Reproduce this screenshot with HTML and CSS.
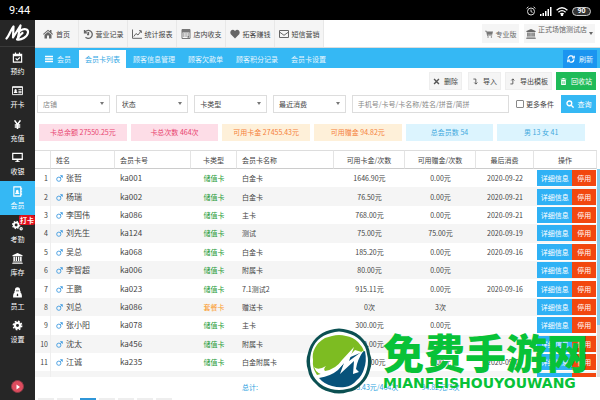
FILE: index.html
```html
<!DOCTYPE html>
<html lang="zh-CN">
<head>
    <meta charset="UTF-8">
    <meta name="viewport" content="width=device-width, initial-scale=1.0">
    <title>会员卡列表</title>
    <link rel="stylesheet" href="styles.css">
</head>
<body>
    <div class="status-bar">
        <span class="clock">9:44</span>
        <div class="status-icons">
            <svg width="10" height="10" viewBox="0 0 10 10" fill="none" stroke="#ddd"><circle cx="5" cy="5.5" r="3.5"/><path d="M5 3.5v2.2l1.6.6M.6 2.4L2.4.8M9.4 2.4L7.6.8"/></svg>
            <svg width="12" height="9" viewBox="0 0 12 9" fill="#fff"><path d="M0 7h1.5v2H0zM2.5 6H4v3H2.5zM5 4h1.5v5H5zM7.5 2H9v7H7.500zM10 0h1.500v9H10z"/></svg>
            <svg width="12" height="9" viewBox="0 0 12 9" fill="none" stroke="#fff" stroke-width="1.3"><path d="M.6 3.200Q6-1.600 11.400 3.200M2.400 5.200Q6 2 9.600 5.200M4.300 7Q6 5.600 7.700 7"/><circle cx="6" cy="8" r=".6"/></svg>
            <span class="battery">90</span>
        </div>
    </div>

    <div class="app">
        <aside class="sidebar">
            <div class="logo">
                <svg width="25" height="18" viewBox="0 0 25 18" fill="none" stroke="#fff" stroke-width="2.200" stroke-linecap="round" stroke-linejoin="round"><path d="M1.500 14.500C4 12 5.500 6 8.500 2.500L8 13.500 15.500 1.500 13 13.500"/><path d="M15.500 6.500C19 4 23.500 5 23 8.500 22.500 13 16 16.500 12 15.500 13.500 12.500 15 10.500 17.500 9"/></svg>
            </div>
            <nav class="side-nav">
                <a href="#"><svg viewBox="0 0 12 12" fill="none" stroke="#fff" stroke-width="1.300"><path d="M1.500 2.500h9v8.500h-9zM1.500 4h9M3.800.5v2.500M8.200.5v2.500M4 7l1.600 1.600L8.500 6"/></svg>预约</a>
                <a href="#"><svg viewBox="0 0 12 12"><path fill="none" stroke="#fff" d="M.5 2h11v8.500H.5z"/><path fill="#fff" d="M.5 1.500h11v1.500H.5zM2 8.800V7.500l1-.7a1.300 1.300 0 1 1 1.800 0l1 .7v1.300zM7 4.500h3.500v1H7zM7 6.300h3.500v1H7zM7 8h3.500v1H7z"/></svg>开卡</a>
                <a href="#"><svg viewBox="0 0 12 12" fill="none" stroke="#fff" stroke-width="1.700"><path d="M2.800 1.500L6 6l3.200-4.500M6 6v5M3 6.500h6M3 8.700h6"/></svg>充值</a>
                <a href="#"><svg viewBox="0 0 12 12"><path fill="none" stroke="#fff" stroke-width="1.300" d="M.8 1.500h10.400v6.700H.8z"/><path fill="#fff" d="M1 7h10v1.500H1zM5 8.500h2v1.500h1.500v1h-5v-1H5z"/></svg>收银</a>
                <a href="#" class="active"><svg viewBox="0 0 12 12"><path fill="none" stroke="#fff" stroke-width="1.200" d="M2 1h7.500v10H2z"/><path fill="#fff" d="M10 2h1v2h-1zM10 5h1v2h-1zM10 8h1v2h-1zM3.500 8.800V7.500l1.200-.8a1.500 1.500 0 1 1 2.100 0l1.200.8v1.300z"/></svg>会员</a>
                <a href="#"><svg viewBox="0 0 12 12" fill="none" stroke="#fff"><circle cx="4.500" cy="5.500" r="2.600" stroke-width="2"/><circle cx="4.500" cy="5.500" r="4" stroke-width="1.200" stroke-dasharray="1.600 1.540"/><circle cx="10" cy="9.500" r="1.200" stroke-width="1.300"/></svg>考勤<span class="badge">打卡</span></a>
                <a href="#"><svg viewBox="0 0 12 12" fill="#fff"><path d="M6 0l5.500 2.500v1H.5v-1zM1.500 4.200h1.700v4.600H1.500zM4 4.200h1.500v4.600H4zM6.500 4.200H8v4.600H6.500zM8.800 4.200h1.700v4.600H8.800zM1 9.200h10v.8H1zM.3 10.500h11.400v1.200H.3z"/></svg>库存</a>
                <a href="#"><svg viewBox="0 0 12 12" fill="#fff"><path d="M3.200 4Q3 .3 6 .3T8.800 4l.9.500-.9.900Q11 6.500 10.800 11.500H1.200Q1 6.500 3.200 5.400l-.9-.9z"/><path fill="#262626" d="M4.300 3.700h3.400v.8H4.300zM5.500 7.300h1l.4 1.900-.9.800-.9-.8z"/></svg>员工</a>
                <a href="#"><svg viewBox="0 0 12 12" fill="none" stroke="#fff"><circle cx="6" cy="6" r="2.800" stroke-width="2.400"/><circle cx="6" cy="6" r="4.600" stroke-width="1.600" stroke-dasharray="1.900 1.710"/></svg>设置</a>
            </nav>
            <div class="player">
                <button class="play" aria-label="播放"><svg width="6" height="6" viewBox="0 0 6 6" fill="#fff"><path d="M1.500.5L5 3 1.500 5.500z"/></svg></button>
            </div>
        </aside>

        <main class="main">
            <header class="top">
                <nav class="top-nav">
                    <a href="#"><svg viewBox="0 0 10 10" fill="#666"><path d="M0 5L5 .7 7 2.300V1h1.500v2.600L10 5l-.6.700L5 2 .6 5.700zM1.500 5.800L5 3l3.500 2.800V9.500H6V6.500H4v3H1.500z"/></svg>首页</a>
                    <a href="#"><svg viewBox="0 0 10 10" fill="none" stroke="#666" stroke-width="1.300"><path d="M1.500 1v2.800h3M1.700 3.500A4 4 0 1 1 2.500 8.300M5.500 3v2.500H4"/></svg>营业记录</a>
                    <a href="#"><svg viewBox="0 0 10 10" fill="none" stroke="#666"><path d="M.5.500v8.800H10M1.800 7.500L4 4.500l2 1.500L9 2M7 1.700h2.300V4"/></svg>统计报表</a>
                    <a href="#"><svg viewBox="0 0 10 10"><path fill="none" stroke="#777" d="M1 .5h8v9H1z"/><path fill="#777" d="M1 1h8v2.500H1zM2 4.500h1.500v1H2zM4.300 4.500h1.500v1H4.300zM6.500 4.500H8v1H6.500zM2 6.500h1.500v1H2zM4.300 6.500h1.500v1H4.300zM6.500 6.500H8v2.300H6.500z"/></svg>店内收支</a>
                    <a href="#"><svg viewBox="0 0 10 10" fill="#666"><path d="M5 9.500L.8 5.200C-1 2.500 2.500-1 5 2c2.500-3 6 .5 4.200 3.200z"/></svg>拓客赚钱</a>
                    <a href="#"><svg viewBox="0 0 10 10" fill="none" stroke="#666"><path d="M.5 1.500h9v7h-9zM.5 3L5 6.300 9.500 3"/></svg>短信营销</a>
                </nav>
                <div class="top-right">
                    <button class="edition"><svg viewBox="0 0 10 10" fill="#777"><path d="M0 1h2l.4 1H10L9 6H3.300l.2.800H9v.8H2.700L1.500 1.900H0z"/><circle cx="3.800" cy="8.700" r=".9"/><circle cx="8" cy="8.700" r=".9"/></svg>专业版</button>
                    <button class="store"><svg viewBox="0 0 12 12" fill="#666"><path d="M6 0l5.500 2.500v1H.5v-1zM1.500 4.200h1.700v4.600H1.500zM4 4.200h1.500v4.600H4zM6.500 4.200H8v4.600H6.500zM8.800 4.200h1.700v4.600H8.800zM1 9.200h10v.8H1zM.3 10.500h11.400v1.200H.3z"/></svg><span>正式场馆测试店</span><i class="caret"></i></button>
                </div>
            </header>

            <nav class="tabs">
                <a href="#" class="tab-home"><svg viewBox="0 0 10 10" fill="#fff"><path d="M0 1h10v1.800H0zM0 4.100h10v1.800H0zM0 7.200h10V9H0z"/></svg>会员</a>
                <a href="#" class="current">会员卡列表</a>
                <a href="#">顾客信息管理</a>
                <a href="#">顾客欠款单</a>
                <a href="#">顾客积分记录</a>
                <a href="#">会员卡设置</a>
                <button class="refresh"><svg viewBox="0 0 10 10" fill="none" stroke="#fff" stroke-width="1.500"><path d="M1.200 4.500A3.800 3.800 0 0 1 8 2.500M8.800 5.500A3.800 3.800 0 0 1 2 7.500"/><path d="M9 .8v2.700H6.300M1 9.200V6.500h2.700"/></svg>刷新</button>
            </nav>

            <div class="toolbar">
                <button><svg viewBox="0 0 10 10" fill="none" stroke="#555" stroke-width="2"><path d="M1.500 1.500l7 7M8.500 1.500l-7 7"/></svg>删除</button>
                <button class="import"><svg viewBox="0 0 10 10" fill="none" stroke="#555" stroke-width="1.300"><path d="M2 1.500h3.500V8.500M3.300 6.500l2.200 2.300 2.200-2.300"/></svg>导入</button>
                <button><svg viewBox="0 0 10 10" fill="none" stroke="#555" stroke-width="1.300"><path d="M2 8.500h3.500v-7M3.300 3.500l2.200-2.300 2.200 2.300"/></svg>导出模板</button>
                <button class="recycle"><svg viewBox="0 0 10 10" fill="#fff"><path d="M3.500 0h3v1H9v1.300H1V1h2.500zM1.700 3h6.600v7H1.700z"/><path stroke="#1fbb58" d="M4 4.500v4M6 4.500v4"/></svg>回收站</button>
            </div>

            <form class="filters">
                <div class="select"><select class="muted" aria-label="店铺"><option>店铺</option></select></div>
                <div class="select"><select aria-label="状态"><option>状态</option></select></div>
                <div class="select"><select aria-label="卡类型"><option>卡类型</option></select></div>
                <div class="select"><select aria-label="最近消费"><option>最近消费</option></select></div>
                <input type="text" class="keyword" aria-label="关键字" placeholder="手机号/卡号/卡名称/姓名/拼音/简拼">
                <label class="more"><input type="checkbox">更多条件</label>
                <button type="button" class="search"><svg viewBox="0 0 10 10" fill="none" stroke="#fff" stroke-width="1.700"><circle cx="4.200" cy="4.200" r="3"/><path d="M6.500 6.500l3 3"/></svg>查询</button>
            </form>

            <div class="stats">
                <div class="stat pink">卡总余额 27550.25元</div>
                <div class="stat pink">卡总次数 464次</div>
                <div class="stat orange">可用卡金 27455.43元</div>
                <div class="stat orange">可用赠金 94.82元</div>
                <div class="stat blue">总会员数 54</div>
                <div class="stat blue">男 13 女 41</div>
            </div>

            <div class="table-wrap">
                <table class="cards">
                    <colgroup>
                        <col class="c-no"><col class="c-name"><col class="c-card"><col class="c-type"><col><col class="c-money"><col class="c-money"><col class="c-date"><col class="c-ops">
                    </colgroup>
                    <thead>
                        <tr>
                            <th></th>
                            <th class="left">姓名</th>
                            <th class="left">会员卡号</th>
                            <th>卡类型</th>
                            <th class="left">会员卡名称</th>
                            <th>可用卡金/次数</th>
                            <th>可用赠金/次数</th>
                            <th>最后消费</th>
                            <th>操作</th>
                        </tr>
                    </thead>
                    <tbody id="rows"></tbody>
                </table>
                <div class="scrollbar"><div class="thumb"></div></div>
            </div>

            <table class="cards total">
                <colgroup>
                    <col class="c-no"><col class="c-name"><col class="c-card"><col class="c-type"><col><col class="c-money"><col class="c-money"><col class="c-date"><col class="c-ops">
                </colgroup>
                <tbody>
                    <tr>
                        <td></td><td></td><td></td><td></td>
                        <td class="left">总计:</td>
                        <td>27455.43元/464次</td>
                        <td>94.82元/3次</td>
                        <td></td><td></td>
                    </tr>
                </tbody>
            </table>

            <div class="pager">
                <i></i><i></i><i class="on"></i><i></i><i></i><i></i><i></i>
            </div>
        </main>
    </div>

    <div class="watermark">
        <svg width="66" height="66" viewBox="0 0 66 66">
            <path fill="#0b5052" d="M24 2Q33-1 42 2 51 4 57 11 63 17 64 26 67 33 64 42 62 50 56 56 50 63 42 64 33 67 24 64 15 62 10 56 3 50 2 42-1 33 2 25 4 16 10 10 16 4 24 2z"/>
            <path fill="#fff" d="M25 5Q33 2 41 5 49 7 54 12 60 18 61 26 63 33 61 41 59 49 54 54 48 60 41 61 33 63 25 61 17 59 12 54 6 48 5 41 3 33 5 25 7 17 12 12 17 7 25 5z"/>
            <path fill="#7dbc22" d="M26 8Q33 6 40 8 47 9 52 14 57 19 59 25L49 22 34 38 22 44 11 47Q6 40 7 32 6 25 9 20 12 14 19 10z"/>
            <path fill="#07527a" d="M59 23Q61 33 58 41 56 48 51 52 46 58 39 59 33 60 26 58 18 56 13 50 25 48 32 42L42 30z"/>
            <path fill="#fff" d="M8 39Q12 43 20 38 17 41 19 43 30 41 36 32L48 19 43 33 58 22Q51 32 50 41L53 44 47 46 48 33 34 46 38 35Q30 45 20 47 11 47 8 39z"/>
        </svg>
        <div class="watermark-text">
            <strong>免费手游网</strong>
            <span>MIANFEISHOUYOUWANG</span>
        </div>
    </div>

    <script>
        // name, card no, type, card name, balance, gift, last visit
        const members = [
            ['张哲', 'ka001', '储值卡', '白金卡', '1646.90元', '0.00元', '2020-09-22'],
            ['杨瑞', 'ka002', '储值卡', '白金卡', '76.50元', '0.00元', '2020-09-21'],
            ['李国伟', 'ka086', '储值卡', '主卡', '768.00元', '0.00元', '2020-09-21'],
            ['刘先生', 'ka124', '储值卡', '测试', '75.00元', '75.00元', '2020-09-19'],
            ['吴总', 'ka068', '储值卡', '白金卡', '185.20元', '0.00元', '2020-09-16'],
            ['李智超', 'ka006', '储值卡', '附属卡', '80.00元', '0.00元', ''],
            ['王鹏', 'ka023', '储值卡', '7.1测试2', '915.11元', '0.00元', '2020-09-16'],
            ['刘总', 'ka086', '套餐卡', '赠送卡', '0次', '3次', ''],
            ['张小阳', 'ka078', '储值卡', '主卡', '300.00元', '0.00元', ''],
            ['沈太', 'ka456', '储值卡', '附属卡', '100.00元', '0.00元', ''],
            ['江诚', 'ka235', '储值卡', '白金附属卡', '5000.00元', '0.00元', '2020-09-09'],
            ['', '', '', '', '', '', '']
        ];
        const male = '<svg class="male" viewBox="0 0 10 10" fill="none" stroke="#3f9be0" stroke-width="1.300"><circle cx="4" cy="6" r="3"/><path d="M6 4l3-3M6 1h3v3"/></svg>';

        document.getElementById('rows').innerHTML = members.map((m, i) => `
            <tr>
                <td class="no">${m[0] ? i + 1 : ''}</td>
                <td class="left name">${m[0] ? male + m[0] : ''}</td>
                <td class="left card-no">${m[1]}</td>
                <td class="${m[2] === '套餐卡' ? 'package' : 'stored'}">${m[2]}</td>
                <td class="left">${m[3]}</td>
                <td>${m[4]}</td>
                <td>${m[5]}</td>
                <td>${m[6]}</td>
                <td class="ops"><div><button class="detail">${m[0] ? '详细信息' : ''}</button><button class="stop">${m[0] ? '停用' : ''}</button></div></td>
            </tr>`).join('');
    </script>
</body>
</html>
```
FILE: styles.css
```css
* {
    box-sizing: border-box;
}
body {
    margin: 0;
    height: 100vh;
    display: flex;
    flex-direction: column;
    overflow: hidden;
    font-family: "Noto Sans CJK SC", sans-serif;
    font-size: 7px;
    line-height: 10px;
    color: #444;
    background-color: #fff;
}
a {
    color: inherit;
    text-decoration: none;
}
button, input, select {
    font: inherit;
    color: inherit;
    margin: 0;
    padding: 0;
    border: 0;
    border-radius: 0;
}
button {
    display: flex;
    align-items: center;
    justify-content: center;
    cursor: pointer;
    white-space: nowrap;
}
svg {
    flex: none;
}
.status-bar {
    flex: none;
    height: 20px;
    padding: 2px 9px 0;
    display: flex;
    align-items: center;
    justify-content: space-between;
    background-color: #000;
    color: #fff;
}
.clock {
    font-family: Roboto, sans-serif;
    font-size: 11px;
}
.status-icons {
    display: flex;
    align-items: center;
    gap: 4px;
}
.battery {
    width: 19px;
    height: 9px;
    border: 1px solid #ccc;
    border-radius: 5px;
    background-color: #333;
    font-family: Roboto, sans-serif;
    font-weight: bold;
    line-height: 7px;
    text-align: center;
}
.app {
    flex: 1;
    min-height: 0;
    display: flex;
}

/* sidebar */
.sidebar {
    flex: none;
    width: 35px;
    display: flex;
    flex-direction: column;
    background-color: #262626;
    color: #fff;
}
.logo {
    height: 27px;
    display: flex;
    align-items: center;
    justify-content: center;
    border-bottom: 1px solid #3a3a3a;
}
.side-nav {
    flex: 1;
    display: grid;
    grid-template-rows: repeat(9, 1fr);
}
.side-nav a {
    position: relative;
    display: flex;
    flex-direction: column;
    align-items: center;
    justify-content: center;
    gap: 3px;
}
.side-nav svg {
    width: 11px;
    height: 11px;
}
.side-nav .active {
    background-color: #35b8f4;
}
.badge {
    position: absolute;
    top: 0;
    right: 0;
    padding: 0 1px;
    border-radius: 2px;
    background-color: #e0101c;
    font-weight: bold;
}
.player {
    height: 51px;
    padding-top: 31px;
}
.play {
    width: 13px;
    height: 13px;
    margin: 0 auto;
    border: 1px solid #8d3a46;
    border-radius: 50%;
    background-color: #dd4c5e;
}

/* header */
.main {
    flex: 1;
    min-width: 0;
    display: flex;
    flex-direction: column;
}
.top {
    height: 28px;
    flex: none;
    display: flex;
    justify-content: space-between;
    border-bottom: 1px solid #ddd;
}
.top-nav {
    display: flex;
    background-color: #f5f5f5;
}
.top-nav a {
    width: 49px;
    display: flex;
    align-items: center;
    justify-content: center;
    gap: 3px;
    border-right: 1px solid #e8e8e8;
    white-space: nowrap;
}
.top-nav a:first-child {
    width: 44px;
}
.top-nav svg, .store svg {
    width: 10px;
    height: 10px;
}
.top-right {
    display: flex;
    gap: 5px;
    padding: 4px 5px;
}
.top-right button {
    background-color: #f5f5f5;
    color: #666;
}
.edition {
    width: 37px;
    gap: 3px;
}
.edition svg {
    width: 8px;
    height: 8px;
}
.store {
    width: 71px;
    gap: 2px;
}
.store span {
    align-self: flex-start;
}
.caret {
    flex: none;
    border: 2px solid transparent;
    border-top: 3px solid #666;
    border-bottom: 0;
}

/* tabs */
.tabs {
    flex: none;
    height: 20px;
    padding: 2px 3px 0 0;
    display: flex;
    background-color: #35b8f4;
    color: #e6f6fe;
}
.tabs a {
    display: flex;
    align-items: center;
    padding: 0 6px;
    white-space: nowrap;
}
.tabs a + a + a {
    margin-left: 1px;
}
.tabs .tab-home {
    width: 44px;
    padding: 0 0 0 10px;
    gap: 4px;
}
.tabs svg {
    width: 8px;
    height: 8px;
}
.tabs .current {
    background-color: #fff;
    color: #35a8e4;
}
.refresh {
    width: 34px;
    margin-left: auto;
    gap: 4px;
    background-color: #1b95f0;
}

/* toolbar and filters */
.toolbar {
    flex: none;
    display: flex;
    justify-content: flex-end;
    gap: 4px;
    padding: 4px 4px 5px;
}
.toolbar button {
    height: 18px;
    padding: 0 3px;
    gap: 4px;
    border: 1px solid #eee;
    background-color: #f5f5f5;
}
.toolbar .import {
    margin-left: 2px;
}
.toolbar svg {
    width: 7px;
    height: 7px;
}
.toolbar .recycle {
    border-color: #1fbb58;
    background-color: #1fbb58;
    color: #fff;
}
.filters {
    flex: none;
    height: 18px;
    padding: 0 4px 0 2px;
    display: flex;
    gap: 6px;
}
.select {
    position: relative;
    flex: 1;
}
.select::after {
    content: "";
    position: absolute;
    top: 7px;
    right: 6px;
    border: 2px solid transparent;
    border-top: 3px solid #777;
    border-bottom: 0;
    pointer-events: none;
}
.select select {
    width: 100%;
    height: 18px;
    padding: 0 5px;
    border: 1px solid #ddd;
    background-color: #fff;
    appearance: none;
}
.select .muted {
    color: #888;
}
.keyword {
    flex: 2;
    min-width: 0;
    padding: 0 5px;
    border: 1px solid #ddd;
}
.keyword::placeholder {
    color: #888;
}
.more {
    display: flex;
    align-items: center;
    gap: 2px;
    padding: 0 1px;
    white-space: nowrap;
}
.more input {
    width: 8px;
    height: 8px;
    border: 1px solid #888;
    border-radius: 1px;
    appearance: none;
}
.more input:checked {
    background-color: #35b8f4;
}
.search {
    width: 35px;
    gap: 4px;
    background-color: #35b8f4;
    color: #fff;
}
.search svg {
    width: 8px;
    height: 8px;
}
.stats {
    flex: none;
    display: grid;
    grid-template-columns: repeat(6, 1fr);
    gap: 4px;
    padding: 11px 15px 9px 4px;
}
.stat {
    line-height: 17px;
    text-align: center;
    white-space: nowrap;
}
.stat.pink {
    background-color: #fddde7;
    color: #e8446f;
}
.stat.orange {
    background-color: #fef0d9;
    color: #f5803a;
}
.stat.blue {
    background-color: #dcf4fe;
    color: #3fa9dd;
}

/* card table */
.table-wrap {
    flex: 1;
    min-height: 0;
    display: flex;
    align-items: flex-start;
    overflow: hidden;
}
.cards {
    flex: 1;
    width: 100%;
    height: 240px;
    table-layout: fixed;
    border-collapse: separate;
    border-spacing: 0;
    text-align: center;
}
.c-no { width: 16px; }
.c-name { width: 64px; }
.c-card { width: 76px; }
.c-type { width: 46px; }
.c-money { width: 71px; }
.c-date { width: 58px; }
.c-ops { width: 63px; }
.cards th, .cards td {
    padding: 0;
    white-space: nowrap;
}
.cards th {
    height: 19px;
    border-top: 1px solid #ddd;
    border-bottom: 1px solid #ccc;
    border-right: 1px solid #e4e4e4;
    font-weight: normal;
}
.cards .left {
    padding-left: 5px;
    text-align: left;
}
.cards tbody tr:nth-child(even) td {
    background-color: #f5f5f5;
}
.cards tbody td.no {
    padding-right: 2px;
    border-right: 1px solid #eee;
    background-color: #fff;
    text-align: right;
}
.cards .name, .cards .card-no {
    font-size: 8px;
}
.male {
    width: 7px;
    height: 7px;
    margin-right: 3px;
    vertical-align: -1px;
}
.stored {
    color: #229a34;
}
.package {
    color: #fb9c2e;
}
.ops div {
    display: flex;
    margin: 0 1px 0 3px;
    color: #fff;
}
.ops button {
    height: 16px;
}
.detail {
    flex: 3;
    background-color: #2fb1f5;
}
.stop {
    flex: 2;
    background-color: #f2470f;
}
.scrollbar {
    flex: none;
    align-self: stretch;
    width: 3px;
    margin-top: 19px;
    background-color: #ddd;
}
.thumb {
    height: 75%;
    background-color: #86cdea;
}
.total {
    flex: none;
    height: 20px;
    padding-right: 3px;
    color: #2c9fe0;
}
.pager {
    flex: none;
    display: flex;
    gap: 3px;
    padding: 1px 3px 0;
}
.pager i {
    width: 16px;
    height: 2px;
    background-color: #eee;
}
.pager .on {
    margin-left: 4px;
    background-color: #2f96d8;
}

/* watermark over the page */
.watermark {
    position: absolute;
    right: 12px;
    bottom: 6px;
    display: flex;
    align-items: center;
    gap: 11px;
    color: #08c238;
    pointer-events: none;
}
.watermark-text {
    display: flex;
    flex-direction: column;
}
.watermark strong {
    font-size: 41px;
    font-weight: 900;
    line-height: 44px;
}
.watermark span {
    font-family: "DejaVu Sans", sans-serif;
    font-size: 14px;
    font-weight: bold;
    line-height: 20px;
}
```
